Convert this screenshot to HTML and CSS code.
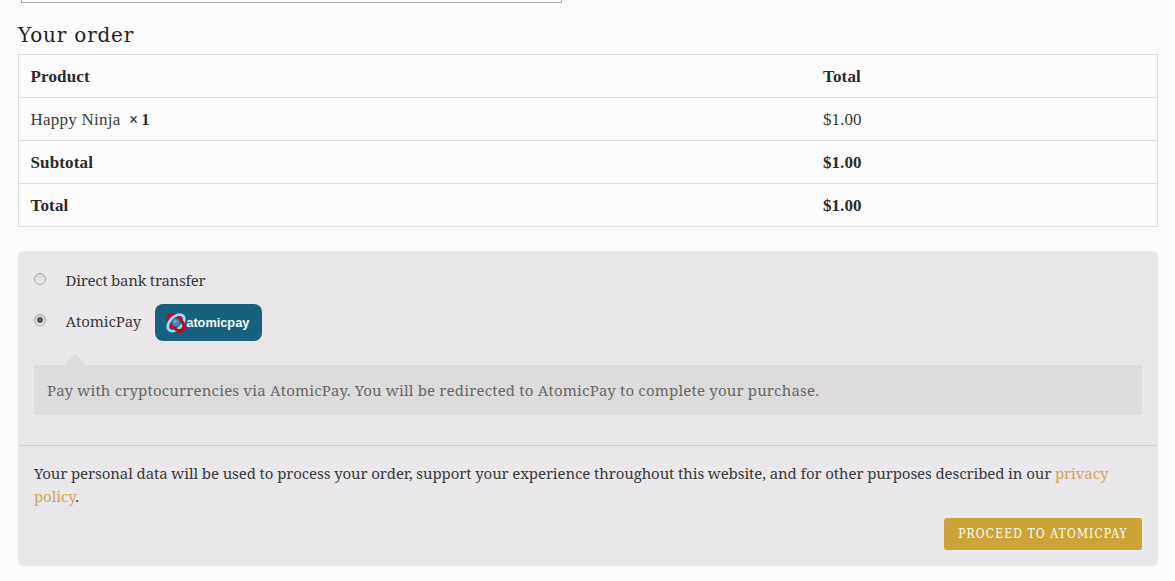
FILE: index.html
```html
<!DOCTYPE html>
<html lang="en">
<head>
<meta charset="utf-8">
<title>Checkout</title>
<link rel="stylesheet" href="styles.css">
</head>
<body>
<main class="checkout">
  <div class="notes-field"></div>
  <h3 class="heading">Your order</h3>
  <table class="order">
    <thead><tr><th>Product</th><th>Total</th></tr></thead>
    <tbody><tr><td class="item">Happy Ninja <strong class="qty">× 1</strong></td><td class="price">$1.00</td></tr></tbody>
    <tfoot>
      <tr><th>Subtotal</th><td class="sum">$1.00</td></tr>
      <tr><th>Total</th><td class="sum">$1.00</td></tr>
    </tfoot>
  </table>
  <section class="payment">
    <div class="methods">
      <label class="method bank"><span class="radio"></span><span class="bank-name">Direct bank transfer</span></label>
      <label class="method atomic"><span class="radio checked"></span><span class="atomic-name">AtomicPay</span>
        <svg class="logo" width="107" height="37" viewBox="0 0 107 37">
          <rect width="107" height="37" rx="8" fill="#15617f"/>
          <g fill="none" stroke-width="3">
            <ellipse cx="21" cy="18.8" rx="10" ry="6" transform="rotate(50 21 18.8)" stroke="#d3061f"/>
            <ellipse cx="21" cy="18.8" rx="10" ry="6" transform="rotate(-45 21 18.8)" stroke="#9fd7f5" stroke-width="2.7"/>
            <path d="M25.5 15.5C28.5 19 30 23.5 28 26C25.8 28 21.5 26.2 18.5 23.5" stroke="#c00822"/>
          </g>
          <circle cx="21" cy="18.6" r="3.9" fill="#4789b4"/>
          <path d="M18.8 18.3L21.5 16.7" stroke="#91c5e3" stroke-width="1.4"/>
          <text class="logo-text" x="31.3" y="22.6" textLength="63" lengthAdjust="spacingAndGlyphs">atomicpay</text>
        </svg>
      </label>
      <div class="description"><span>Pay with cryptocurrencies via AtomicPay. You will be redirected to AtomicPay to complete your purchase.</span></div>
    </div>
    <div class="place-order">
      <p class="privacy">Your personal data will be used to process your order, support your experience throughout this website, and for other purposes described in our <a class="link">privacy<br>policy</a>.</p>
      <button class="submit">PROCEED TO ATOMICPAY</button>
    </div>
  </section>
</main>
</body>
</html>
```
FILE: styles.css
```css
* { box-sizing: border-box; }
body { margin: 0; background: #fcfcfc; color: #3a3a3a; overflow: hidden; font-family: "Noto Serif", "DejaVu Serif Condensed", "DejaVu Serif", serif; }
.checkout { width: 1140px; margin-left: 18px; }
.notes-field { width: 541px; height: 3px; margin-left: 3px; border: 1px solid #a5a5a5; border-top: 0; background: #fff; }
.heading { margin: 17px 0 0; height: 34px; font: 400 20px/31px "DejaVu Serif", serif; letter-spacing: .8px; color: #222; white-space: nowrap; }
.order { width: 1140px; height: 173px; table-layout: fixed; border-collapse: collapse; border: 1px solid #dedede; font: 17px/22px "Liberation Serif", serif; }
.order tr { height: 43px; }
.order th, .order td { padding: 2px 12px 0 11.5px; text-align: left; border-top: 1px solid #dedede; white-space: nowrap; }
.order th:first-child, .order td:first-child { width: 793px; }
.order th { font-weight: 700; color: #2b2b2b; letter-spacing: .15px; }
.order .item { letter-spacing: .25px; }
.order .qty { font-size: 16px; letter-spacing: -.3px; color: #2b2b2b; margin-left: 4px; }
.order .price, .order .sum { letter-spacing: .05px; }
.order .sum { font-weight: 700; color: #2b2b2b; }
.payment { height: 315px; margin-top: 24px; background: #e9e7ea; border-radius: 5px; }
.methods { height: 195px; padding: 16px 16px 0; border-bottom: 1px solid #cfcdd0; }
.method { display: flex; align-items: center; white-space: nowrap; font-size: 15px; line-height: 26px; }
.bank { height: 26px; }
.atomic { height: 37px; margin-top: 11px; }
.radio { width: 12px; height: 12px; margin: -3px 19.5px 0 0; border: 1px solid #a4a4a4; border-radius: 50%; background: linear-gradient(#d7d7d7, #eee); display: grid; place-items: center; }
.radio.checked { margin-top: -5px; }
.checked::after { content: ""; width: 6px; height: 6px; border-radius: 50%; background: #555; }
.bank-name { letter-spacing: -.25px; }
.atomic-name { width: 89.5px; letter-spacing: -.1px; padding-bottom: 4px; }
.logo { display: block; }
.logo-text { font: 700 13.5px "Liberation Sans", sans-serif; fill: #fff; }
.description { position: relative; margin-top: 24px; height: 50px; padding: 0 13px; border-radius: 2px; background: #dddbdc; color: #686868; font-size: 15px; letter-spacing: .18px; line-height: 51px; white-space: nowrap; }
.description::before { content: ""; position: absolute; left: 30px; top: -11px; border: 11px solid transparent; border-top: 0; border-bottom-color: #dddbdc; }
.place-order { padding: 16px 16px 16px; display: flex; flex-direction: column; align-items: flex-end; }
.privacy { width: 100%; height: 46px; margin: 0 0 10px; font-size: 15px; letter-spacing: -.095px; line-height: 23px; white-space: nowrap; }
.link { color: #cfa35b; }
.submit { width: 198px; height: 32px; padding: 0; border: 0; border-radius: 3px; background: #cba338; color: #fff; font: 12px/32px "DejaVu Serif Condensed", "DejaVu Serif", serif; letter-spacing: 1.12px; white-space: nowrap; }
```
